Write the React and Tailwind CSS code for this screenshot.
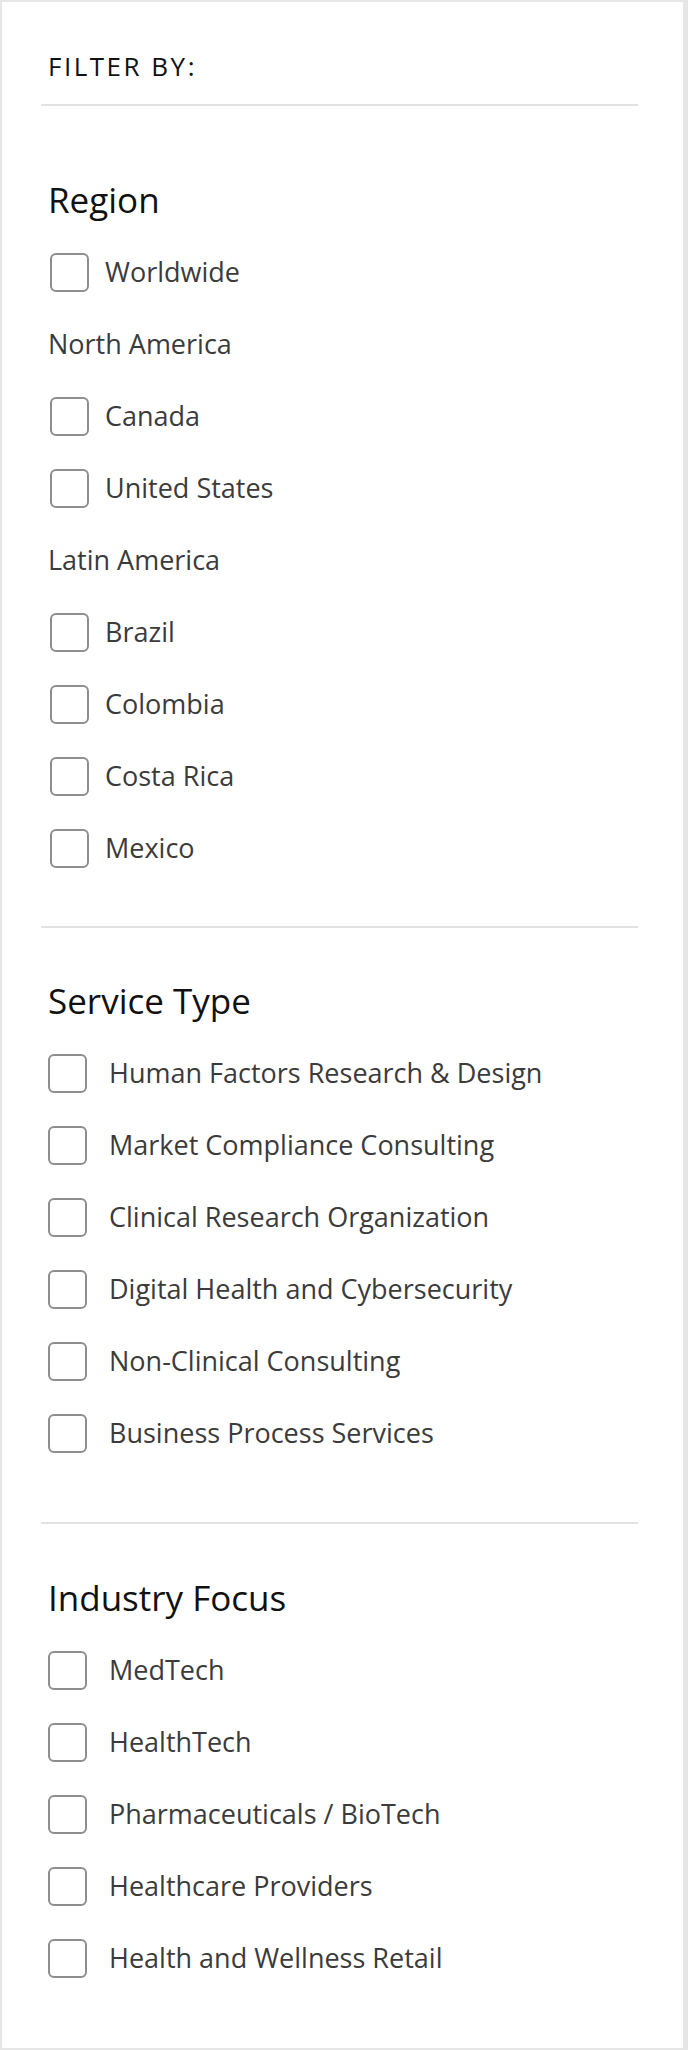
import React from 'react'

const regionGroups = [
  { type: 'item', label: 'Worldwide' },
  { type: 'group', label: 'North America' },
  { type: 'item', label: 'Canada' },
  { type: 'item', label: 'United States' },
  { type: 'group', label: 'Latin America' },
  { type: 'item', label: 'Brazil' },
  { type: 'item', label: 'Colombia' },
  { type: 'item', label: 'Costa Rica' },
  { type: 'item', label: 'Mexico' }
]

const serviceTypes = [
  'Human Factors Research & Design',
  'Market Compliance Consulting',
  'Clinical Research Organization',
  'Digital Health and Cybersecurity',
  'Non-Clinical Consulting',
  'Business Process Services'
]

const industries = [
  'MedTech',
  'HealthTech',
  'Pharmaceuticals / BioTech',
  'Healthcare Providers',
  'Health and Wellness Retail'
]

const Box = () => (
  <span className="block w-[39px] h-[39px] shrink-0 rounded-[6px] border-2 border-[#8e8e8e] bg-white" />
)

// region rows sit a couple px further right with a tighter gap than the others
const RegionRow = ({ label }) => (
  <label className="h-[72px] flex items-center pl-[9px] gap-[16px] cursor-pointer">
    <Box />
    <span className="text-[27px] text-[#3b3b3b]">{label}</span>
  </label>
)

const Row = ({ label }) => (
  <label className="h-[72px] flex items-center pl-[7px] gap-[22px] cursor-pointer">
    <Box />
    <span className="text-[27px] text-[#3b3b3b]">{label}</span>
  </label>
)

const Heading = ({ children }) => (
  <h3 className="h-[72px] flex items-center pl-[7px] text-[35px] text-[#111] font-normal">{children}</h3>
)

const App = () => {
  return (
    <div
      className="w-[688px] h-[2050px] bg-white border-2 border-r-[5px] border-[#e6e6e6] pl-[39px] pr-[45px] box-border"
      style={{ fontFamily: '"Open Sans", Lato, sans-serif' }}
    >
      {/* Header */}
      <div className="h-[72px] mt-[28px] flex items-center pl-[7px] text-[26px] tracking-[2.5px] text-[#111]">
        FILTER BY:
      </div>
      <div className="mt-[2px] h-[2px] bg-[#e2e2e2]" />

      {/* Region */}
      <div className="mt-[58px]">
        <Heading>Region</Heading>
        {regionGroups.map((r) =>
          r.type === 'group' ? (
            <div key={r.label} className="h-[72px] flex items-center pl-[7px] text-[27px] text-[#3b3b3b]">
              {r.label}
            </div>
          ) : (
            <RegionRow key={r.label} label={r.label} />
          )
        )}
      </div>
      <div className="mt-[42px] h-[2px] bg-[#e2e2e2]" />

      {/* Service Type */}
      <div className="mt-[37px]">
        <Heading>Service Type</Heading>
        {serviceTypes.map((s) => (
          <Row key={s} label={s} />
        ))}
      </div>
      <div className="mt-[53px] h-[2px] bg-[#e2e2e2]" />

      {/* Industry Focus */}
      <div className="mt-[38px]">
        <Heading>Industry Focus</Heading>
        {industries.map((s) => (
          <Row key={s} label={s} />
        ))}
      </div>
    </div>
  )
}

export default App
